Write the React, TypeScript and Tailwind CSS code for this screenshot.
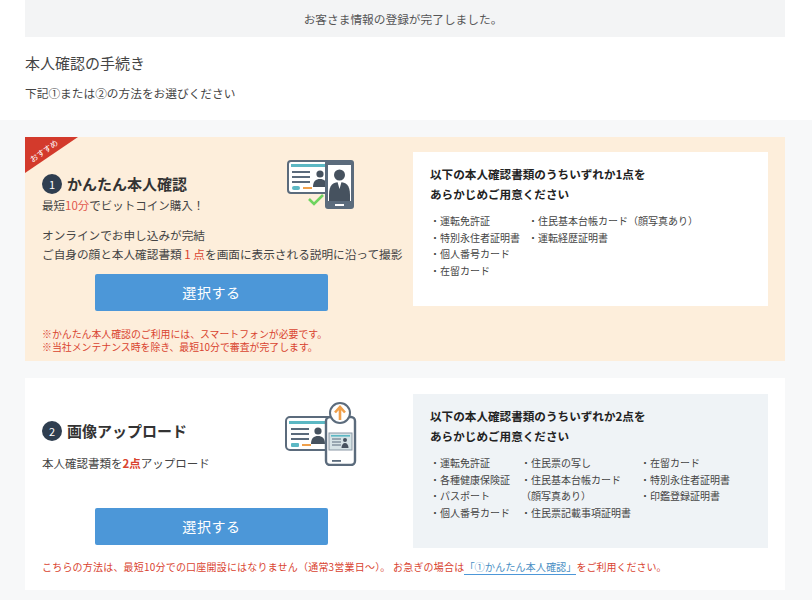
const jp = { fontFamily: '"Noto Sans CJK JP", "Noto Sans", sans-serif' };

function EasyIcon() {
  return (
    <svg width="68" height="52" viewBox="0 0 68 52" fill="none">
      <rect x="1" y="2" width="44" height="32" rx="3" fill="#fff" stroke="#5b6b7c" strokeWidth="2" />
      <rect x="4" y="5" width="39" height="3" fill="#5cb8c4" />
      <path d="M5 13h18M5 18h18M5 23h18" stroke="#5b6b7c" strokeWidth="1.8" />
      <rect x="5" y="27" width="8" height="4" rx="2" fill="#5cb8c4" />
      <rect x="16" y="28" width="9" height="2" fill="#f0a04b" />
      <circle cx="33" cy="15" r="3.6" fill="#46525f" />
      <path d="M26 28c0-6 3-8 7-8s7 2 7 8z" fill="#46525f" />
      <rect x="38" y="1" width="29" height="49" rx="3" fill="#5b6b7c" />
      <rect x="41" y="6" width="23" height="36" fill="#fff" />
      <circle cx="52.500" cy="16" r="5.500" fill="#46525f" />
      <path d="M42 36c0-10 4-13 10.500-13S63 26 63 36v6H42z" fill="#46525f" />
      <path d="M50.500 23l2 7 2-7z" fill="#fff" />
      <rect x="48" y="45" width="9" height="2" fill="#fff" />
      <path d="M22 40l5 5 9-9" stroke="#6fd45f" strokeWidth="2.600" />
    </svg>
  );
}

function UploadIcon() {
  return (
    <svg width="72" height="64" viewBox="0 0 72 64" fill="none">
      <rect x="1" y="15" width="46" height="33" rx="4" fill="#fff" stroke="#5b6b7c" strokeWidth="2" />
      <rect x="4" y="19" width="40" height="3" fill="#5cb8c4" />
      <path d="M6 27h18M6 32h18M6 37h18" stroke="#5b6b7c" strokeWidth="1.800" />
      <rect x="6" y="41" width="8" height="4" rx="1" fill="#5cb8c4" />
      <rect x="17" y="42" width="9" height="2" fill="#f0a04b" />
      <circle cx="33" cy="29" r="3.600" fill="#46525f" />
      <path d="M26 42c0-6 3-8 7-8s7 2 7 8z" fill="#46525f" />
      <rect x="41" y="15" width="29" height="48" rx="4" fill="#fff" stroke="#5b6b7c" strokeWidth="2.400" />
      <rect x="47" y="58" width="9" height="1.800" fill="#5b6b7c" />
      <rect x="44" y="31" width="23" height="17" fill="#d6e3e6" stroke="#8b98a5" />
      <rect x="46" y="33" width="19" height="1.600" fill="#5cb8c4" />
      <path d="M47 37h9M47 40h9M47 43h9" stroke="#5b6b7c" />
      <circle cx="60" cy="38" r="2" fill="#46525f" />
      <path d="M56.500 46c0-3 1.500-5 3.500-5s3.500 2 3.500 5z" fill="#46525f" />
      <circle cx="55" cy="11" r="10" fill="#fff" stroke="#5b6b7c" strokeWidth="2" />
      <path d="M55 18V6M50 10.500L55 5l5 5.500" stroke="#f0a04b" strokeWidth="2.600" />
    </svg>
  );
}

function Num({ n }: { n: number }) {
  return (
    <span className="flex h-[20px] w-[20px] shrink-0 items-center justify-center rounded-full bg-[#2f3e50] text-[11px] leading-none text-white">
      {n}
    </span>
  );
}

function SelectButton({ className }: { className: string }) {
  return (
    <button className={`flex h-[37px] w-[233px] items-center justify-center rounded-[2px] bg-[#4c97d8] text-[14px] tracking-[0.6px] text-white ${className}`}>
      選択する
    </button>
  );
}

function Panel({ bg, count, cols }: { bg: string; count: string; cols: { w: string; items: string[] }[] }) {
  return (
    <div className={`h-[154px] w-[355px] px-[17px] pt-[12px] ${bg}`}>
      <p className="text-[11.600px] font-bold leading-[20px] text-[#222]">以下の本人確認書類のうちいずれか{count}点を</p>
      <p className="text-[11.600px] font-bold leading-[20px] text-[#222]">あらかじめご用意ください</p>
      <div className="mt-[9px] flex text-[10px] leading-[16.700px] text-[#444]">
        {cols.map((c, i) => (
          <ul key={i} className={c.w}>
            {c.items.map((t) => (
              <li key={t} className="whitespace-nowrap">{t}</li>
            ))}
          </ul>
        ))}
      </div>
    </div>
  );
}

export default function App() {
  return (
    <div style={jp} className="h-[600px] w-[812px] overflow-hidden bg-[#f7f8f9] text-[#444]">
      {/* Header */}
      <div className="h-[120px] bg-white pl-[25px] pr-[27px]">
        <div className="flex h-[37px] items-center justify-center bg-[#f3f4f5] pr-[4px] text-[11.700px] text-[#555]">
          お客さま情報の登録が完了しました。
        </div>
        <h1 className="mt-[16px] text-[15px] leading-[20px] text-[#444]">本人確認の手続き</h1>
        <p className="mt-[12px] text-[11.700px] leading-[16px] text-[#444]">下記①または②の方法をお選びください</p>
      </div>

      <div className="flex flex-col gap-[17px] pl-[25px] pr-[27px] pt-[17px]">
        {/* Card 1 */}
        <section className="relative flex h-[224px] justify-between bg-[#fdeedb] pl-[17px] pr-[17px] pt-[15px]">
          <div className="absolute left-0 top-0 h-[36px] w-[53px] bg-[#d33a2c] [clip-path:polygon(0_0,100%_0,0_100%)]" />
          <span className="absolute left-[3px] top-[9px] -rotate-[35deg] text-[8px] leading-[10px] text-white">おすすめ</span>
          <div className="w-[365px]">
            <div className="flex h-[45px] justify-between pr-[52px] pt-[7px]">
              <div className="mt-[15px] flex h-[20px] items-center gap-[5px]">
                <Num n={1} />
                <h2 className="text-[15px] font-bold text-[#333]">かんたん本人確認</h2>
              </div>
              <EasyIcon />
            </div>
            <p className="text-[11.500px] leading-[16px]">最短<span className="text-[#e2574c]">10分</span>でビットコイン購入！</p>
            <p className="mt-[12px] whitespace-nowrap text-[11.650px] leading-[19px]">
              オンラインでお申し込みが完結
              <br />
              ご自身の顔と本人確認書類<span className="text-[#d9432f]"> 1 点</span>を画面に表示される説明に沿って撮影
            </p>
            <SelectButton className="ml-[53px] mt-[11px]" />
            <p className="mt-[17px] whitespace-nowrap text-[9.900px] leading-[13px] text-[#d9432f]">
              ※かんたん本人確認のご利用には、スマートフォンが必要です。
              <br />
              ※当社メンテナンス時を除き、最短10分で審査が完了します。
            </p>
          </div>
          <Panel
            bg="bg-white"
            count="1"
            cols={[
              { w: "w-[98px]", items: ["・運転免許証", "・特別永住者証明書", "・個人番号カード", "・在留カード"] },
              { w: "", items: ["・住民基本台帳カード（顔写真あり）", "・運転経歴証明書"] },
            ]}
          />
        </section>

        {/* Card 2 */}
        <section className="flex h-[212px] flex-col bg-white px-[17px] pt-[16px]">
          <div className="flex justify-between">
            <div className="w-[365px]">
              <div className="flex h-[61px] justify-between pr-[50px] pt-[8px]">
                <div className="mt-[19px] flex h-[20px] items-center gap-[5px]">
                  <Num n={2} />
                  <h2 className="text-[15px] font-bold text-[#333]">画像アップロード</h2>
                </div>
                <UploadIcon />
              </div>
              <p className="text-[11.500px] leading-[16px]">本人確認書類を<span className="font-bold text-[#d9432f]">2点</span>アップロード</p>
              <SelectButton className="ml-[53px] mt-[37px]" />
            </div>
            <Panel
              bg="bg-[#eff3f6]"
              count="2"
              cols={[
                { w: "w-[91px]", items: ["・運転免許証", "・各種健康保険証", "・パスポート", "・個人番号カード"] },
                { w: "w-[119px]", items: ["・住民票の写し", "・住民基本台帳カード", "（顔写真あり）", "・住民票記載事項証明書"] },
                { w: "", items: ["・在留カード", "・特別永住者証明書", "・印鑑登録証明書"] },
              ]}
            />
          </div>
          <p className="mt-[12px] whitespace-nowrap text-[10px] leading-[14px] text-[#d9432f]">
            <span className="tracking-[0.2px]">こちらの方法は、最短10分での口座開設にはなりません（通常3営業日～）。 お急ぎの場合は</span>
            <a className="border-b border-[#4c97d8] text-[10.200px] text-[#4a8fc4]">「①かんたん本人確認」</a>
            をご利用ください。
          </p>
        </section>
      </div>
    </div>
  );
}
